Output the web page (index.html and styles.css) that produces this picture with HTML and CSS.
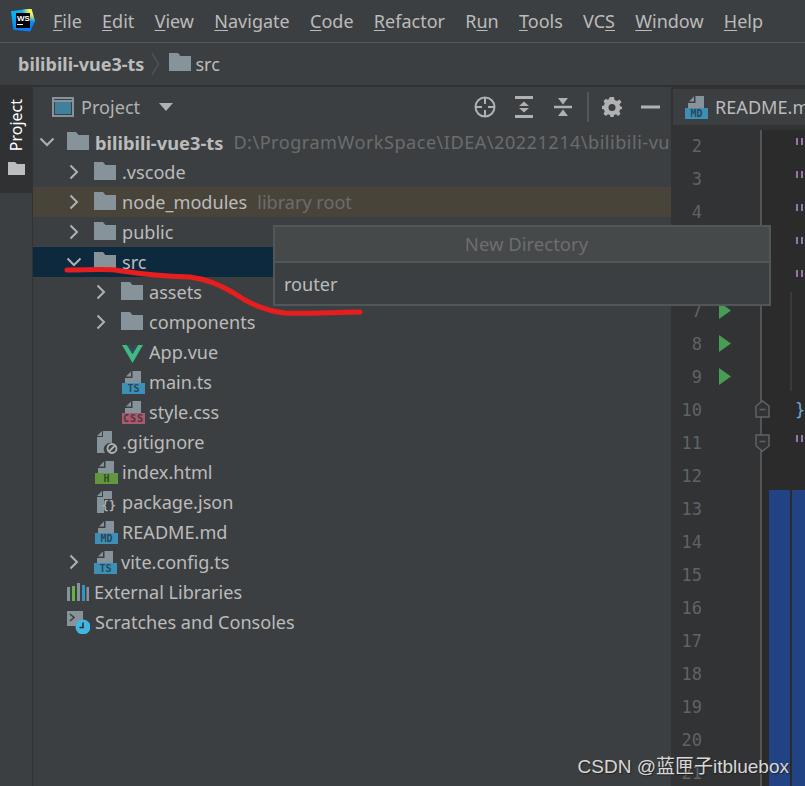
FILE: index.html
```html
<!DOCTYPE html>
<html lang="en">
<head>
<meta charset="utf-8">
<title>bilibili-vue3-ts</title>
<link rel="stylesheet" href="styles.css">
</head>
<body>
<svg width="0" height="0" class="defs">
  <defs>
    <symbol id="folder" viewBox="0 0 22 18"><path d="M0 0H9L11.500 3H22V18H0Z" fill="#87939a"/></symbol>
    <symbol id="chev-r" viewBox="0 0 12 16"><path d="M2.500 1.500L9 8L2.500 14.500" fill="none" stroke="#afb1b3" stroke-width="2"/></symbol>
    <symbol id="chev-d" viewBox="0 0 16 12"><path d="M1.500 2.500L8 9L14.500 2.500" fill="none" stroke="#afb1b3" stroke-width="2"/></symbol>
    <symbol id="sheet" viewBox="0 0 23 23"><path d="M10.500 0H19V12H3V7H10.500Z" fill="#87939a"/><path d="M4 5.500L9 0.500V5.500Z" fill="#87939a"/></symbol>
  </defs>
</svg>
<div class="app">
  <header class="menubar">
    <div class="logo"><span class="logo-box"><span class="logo-inner"><span class="logo-ws">WS</span><span class="logo-bar"></span></span></span></div>
    <nav class="menu">
      <span class="m m-file"><u>F</u>ile</span>
      <span class="m"><u>E</u>dit</span>
      <span class="m"><u>V</u>iew</span>
      <span class="m"><u>N</u>avigate</span>
      <span class="m"><u>C</u>ode</span>
      <span class="m"><u>R</u>efactor</span>
      <span class="m">R<u>u</u>n</span>
      <span class="m"><u>T</u>ools</span>
      <span class="m">VC<u>S</u></span>
      <span class="m"><u>W</u>indow</span>
      <span class="m"><u>H</u>elp</span>
    </nav>
  </header>
  <div class="navbar">
    <strong class="crumb-root">bilibili-vue3-ts</strong>
    <svg class="crumb-sep" width="9" height="24" viewBox="0 0 9 24"><path d="M1 1L7.500 12L1 23" fill="none" stroke="#5d5f60" stroke-width="1"/></svg>
    <svg class="crumb-folder" width="22" height="18"><use href="#folder"/></svg>
    <span class="crumb-src">src</span>
  </div>
  <main class="workspace">
    <aside class="stripe">
      <div class="stripe-tab">
        <span class="stripe-label">Project</span>
        <svg class="stripe-icon" width="17" height="13" viewBox="0 0 17 13"><path d="M0 0H7L9 2H17V13H0Z" fill="#bdbdbd"/></svg>
      </div>
    </aside>
    <section class="panel">
      <div class="panel-head">
        <svg class="ph-icon" width="22" height="20" viewBox="0 0 22 20"><rect x="1" y="1" width="20" height="18" fill="none" stroke="#87939a" stroke-width="2"/><rect x="2" y="3" width="18" height="2" fill="#87939a"/><rect x="3" y="5" width="16" height="12" fill="#40809e"/></svg>
        <span class="ph-title">Project</span>
        <svg class="ph-caret" width="14" height="8" viewBox="0 0 14 8"><path d="M0 0H14L7 8Z" fill="#afb1b3"/></svg>
        <div class="ph-tools">
          <svg class="t-cross" width="22" height="22" viewBox="0 0 22 22"><circle cx="11" cy="11" r="9.500" fill="none" stroke="#afb1b3" stroke-width="2"/><path d="M11 1V8M11 14V21M1 11H8M14 11H21" stroke="#afb1b3" stroke-width="2"/></svg>
          <svg class="t-exp" width="18" height="22" viewBox="0 0 18 22"><path d="M0 1.500H18M0 20.500H18" stroke="#afb1b3" stroke-width="3"/><path d="M9 5.500L14 10H4ZM9 16.500L4 12H14Z" fill="#afb1b3"/></svg>
          <svg class="t-col" width="18" height="20" viewBox="0 0 18 20"><path d="M0 10H18" stroke="#afb1b3" stroke-width="2.500"/><path d="M9 7.500L4 1H14ZM9 12.500L14 19H4Z" fill="#afb1b3"/></svg>
          <span class="t-sep"></span>
          <svg class="t-gear" width="20" height="20" viewBox="0 0 20 20"><path d="M8 0H12L12.600 3L15 4L17.500 2.500L19.500 5L17.500 7.500L18 9L20 10V12L18 12.500L17.300 14.500L18.500 17L16 19L14 17.300L12 18L11.500 20H8.500L8 18L6 17.300L4 19L1.500 17L2.700 14.500L2 12.500L0 12V9L2 8.500L2.700 6.500L1.500 4L4 1.800L6 3Z" fill="#afb1b3"/><circle cx="10" cy="10.500" r="3.500" fill="#3c3f41"/></svg>
          <svg class="t-min" width="19" height="4" viewBox="0 0 19 4"><rect width="19" height="3" y="0.500" fill="#afb1b3"/></svg>
        </div>
      </div>
      <div class="tree">
        <div class="row d0"><svg class="chev" width="16" height="12"><use href="#chev-d"/></svg><svg class="ic-folder" width="22" height="18"><use href="#folder"/></svg><strong class="name name-root">bilibili-vue3-ts</strong><span class="hint hint-path">D:\ProgramWorkSpace\IDEA\20221214\bilibili-vue3-ts</span></div>
        <div class="row d1"><svg class="chev" width="12" height="16"><use href="#chev-r"/></svg><svg class="ic-folder" width="22" height="18"><use href="#folder"/></svg><span class="name">.vscode</span></div>
        <div class="row d1 lib"><svg class="chev" width="12" height="16"><use href="#chev-r"/></svg><svg class="ic-folder" width="22" height="18"><use href="#folder"/></svg><span class="name">node_modules</span><span class="hint">library root</span></div>
        <div class="row d1"><svg class="chev" width="12" height="16"><use href="#chev-r"/></svg><svg class="ic-folder" width="22" height="18"><use href="#folder"/></svg><span class="name">public</span></div>
        <div class="row d1 sel"><svg class="chev" width="16" height="12"><use href="#chev-d"/></svg><svg class="ic-folder" width="22" height="18"><use href="#folder"/></svg><span class="name">src</span></div>
        <div class="row d2"><svg class="chev" width="12" height="16"><use href="#chev-r"/></svg><svg class="ic-folder" width="22" height="18"><use href="#folder"/></svg><span class="name">assets</span></div>
        <div class="row d2"><svg class="chev" width="12" height="16"><use href="#chev-r"/></svg><svg class="ic-folder" width="22" height="18"><use href="#folder"/></svg><span class="name">components</span></div>
        <div class="row d2 leaf"><svg class="ic-file" width="23" height="23" viewBox="0 0 23 23"><path d="M0 4H5L10.500 13L16 4H21L10.500 22Z" fill="#41b883"/><path d="M5 4H8L10.500 8L13 4H16L10.500 13Z" fill="#35495e"/></svg><span class="name">App.vue</span></div>
        <div class="row d2 leaf"><span class="fico"><svg width="23" height="23"><use href="#sheet"/></svg><span class="tag tag-ts">TS</span></span><span class="name">main.ts</span></div>
        <div class="row d2 leaf"><span class="fico"><svg width="23" height="23"><use href="#sheet"/></svg><span class="tag tag-css">CSS</span></span><span class="name">style.css</span></div>
        <div class="row d1 leaf"><svg class="ic-file" width="23" height="23" viewBox="0 0 23 23"><path d="M8 0H17V12A6.500 6.500 0 0 0 10 22H2V6H8Z" fill="#87939a"/><path d="M7 0V5H2Z" fill="#87939a"/><circle cx="17" cy="17.500" r="4.500" fill="none" stroke="#afb1b3" stroke-width="1.800"/><path d="M14 20.500L20 14.500" stroke="#afb1b3" stroke-width="1.800"/></svg><span class="name">.gitignore</span></div>
        <div class="row d1 leaf"><span class="fico"><svg width="23" height="23"><use href="#sheet"/></svg><span class="tag tag-html">H</span></span><span class="name">index.html</span></div>
        <div class="row d1 leaf"><svg class="ic-file" width="23" height="23" viewBox="0 0 23 23"><path d="M8 0H17V8H9V22H2V6H8Z" fill="#87939a"/><path d="M7 0V5H2Z" fill="#87939a"/><text x="6.500" y="19" class="json-text">{}</text></svg><span class="name">package.json</span></div>
        <div class="row d1 leaf"><span class="fico"><svg width="23" height="23"><use href="#sheet"/></svg><span class="tag tag-ts">MD</span></span><span class="name">README.md</span></div>
        <div class="row d1"><svg class="chev" width="12" height="16"><use href="#chev-r"/></svg><span class="fico fico-gap"><svg width="23" height="23"><use href="#sheet"/></svg><span class="tag tag-ts">TS</span></span><span class="name">vite.config.ts</span></div>
        <div class="row d0 leaf"><svg class="ic-file" width="22" height="18" viewBox="0 0 22 18"><rect x="0" y="4" width="3" height="14" fill="#87939a"/><rect x="5" y="3" width="3" height="15" fill="#62b543"/><rect x="10" y="0" width="3" height="18" fill="#87939a"/><rect x="15" y="2" width="3" height="16" fill="#3592c4"/><rect x="19.500" y="4" width="2.500" height="14" fill="#87939a"/></svg><span class="name">External Libraries</span></div>
        <div class="row d0 leaf"><svg class="ic-file" width="23" height="23" viewBox="0 0 23 23"><path d="M0 0H16V9A7.500 7.500 0 0 0 9 15H0Z" fill="#87939a"/><path d="M3 3L7 6.500L3 10" fill="none" stroke="#3c3f41" stroke-width="1.600"/><circle cx="16" cy="16" r="7.500" fill="#40b6e0"/><path d="M16 11.500V16.500H12.500" fill="none" stroke="#2b2b2b" stroke-width="1.500"/></svg><span class="name">Scratches and Consoles</span></div>
      </div>
    </section>
    <section class="editor">
      <div class="tabbar">
        <span class="fico"><svg width="23" height="23"><use href="#sheet"/></svg><span class="tag tag-ts">MD</span></span>
        <span class="tab-title">README.md</span>
      </div>
      <div class="lines">
        <div class="ln"><span class="num">2</span><span class="mark"></span><span class="code"><i class="qq"></i></span></div>
        <div class="ln"><span class="num">3</span><span class="mark"></span><span class="code"><i class="qq"></i></span></div>
        <div class="ln"><span class="num">4</span><span class="mark"></span><span class="code"><i class="qq"></i></span></div>
        <div class="ln"><span class="num">5</span><span class="mark"></span><span class="code"><i class="qq"></i></span></div>
        <div class="ln"><span class="num">6</span><span class="mark"></span><span class="code"><i class="qq"></i></span></div>
        <div class="ln"><span class="num">7</span><span class="mark"><svg class="run" width="12" height="17" viewBox="0 0 12 17"><path d="M0 0L12 8.500L0 17Z" fill="#499c54"/></svg></span><span class="code"></span></div>
        <div class="ln"><span class="num">8</span><span class="mark"><svg class="run" width="12" height="17" viewBox="0 0 12 17"><path d="M0 0L12 8.500L0 17Z" fill="#499c54"/></svg></span><span class="code"></span></div>
        <div class="ln"><span class="num">9</span><span class="mark"><svg class="run" width="12" height="17" viewBox="0 0 12 17"><path d="M0 0L12 8.500L0 17Z" fill="#499c54"/></svg></span><span class="code"></span></div>
        <div class="ln"><span class="num">10</span><span class="mark"></span><span class="code"><b class="brace">}</b></span></div>
        <div class="ln"><span class="num">11</span><span class="mark"></span><span class="code"><i class="qq"></i></span></div>
        <div class="ln"><span class="num">12</span><span class="mark"></span><span class="code"></span></div>
        <div class="ln"><span class="num">13</span><span class="mark"></span><span class="code"></span></div>
        <div class="ln"><span class="num">14</span><span class="mark"></span><span class="code"></span></div>
        <div class="ln"><span class="num">15</span><span class="mark"></span><span class="code"></span></div>
        <div class="ln"><span class="num">16</span><span class="mark"></span><span class="code"></span></div>
        <div class="ln"><span class="num">17</span><span class="mark"></span><span class="code"></span></div>
        <div class="ln"><span class="num">18</span><span class="mark"></span><span class="code"></span></div>
        <div class="ln"><span class="num">19</span><span class="mark"></span><span class="code"></span></div>
        <div class="ln"><span class="num">20</span><span class="mark"></span><span class="code"></span></div>
        <div class="ln"><span class="num">21</span><span class="mark"></span><span class="code"></span></div>
      </div>
      <div class="selection"></div>
      <div class="indent indent-a"></div>
      <div class="indent indent-b"></div>
      <svg class="fold fold-a" width="15" height="18" viewBox="0 0 15 18"><path d="M1 17V6L7.500 1L14 6V17Z" fill="#313335" stroke="#606366" stroke-width="1.500"/><path d="M4.500 9.500H10.500" stroke="#606366" stroke-width="1.500"/></svg>
      <svg class="fold fold-b" width="15" height="18" viewBox="0 0 15 18"><path d="M1 1V12L7.500 17L14 12V1Z" fill="#313335" stroke="#606366" stroke-width="1.500"/><path d="M4.500 7.500H10.500" stroke="#606366" stroke-width="1.500"/></svg>
    </section>
  </main>
</div>
<div class="popup">
  <div class="popup-title">New Directory</div>
  <div class="popup-input">router</div>
</div>
<svg class="scribble" width="805" height="786" viewBox="0 0 805 786"><path d="M67 270C85 270 100 269 115 270C135 273 150 276 190 277C205 279 220 285 232 292C245 301 262 311 285 313C310 314 335 312 360 312" fill="none" stroke="#e81e1e" stroke-width="5" stroke-linecap="round"/></svg>
<div class="watermark">CSDN @蓝匣子itbluebox</div>
</body>
</html>
```
FILE: styles.css
```css
* { box-sizing: border-box; }
html, body { margin: 0; padding: 0; height: 100%; overflow: hidden; }
body { position: relative; background: #3c3f41; color: #bbbbbb; font-family: "Noto Sans", "Open Sans", sans-serif; font-size: 18.1px; }
.defs { position: absolute; }
.app { display: flex; flex-direction: column; width: 805px; height: 786px; }

.menubar { display: flex; align-items: center; height: 43px; flex: none; border-bottom: 1px solid #515658; }
.logo { width: 53px; flex: none; padding-left: 11px; padding-bottom: 2px; }
.logo-box { display: block; width: 24px; height: 23px; padding: 4px 5px; background: radial-gradient(circle at 100% 0, #fcf84a 0 18%, transparent 40%), linear-gradient(160deg, #07c3f2 0%, #087cfa 80%); clip-path: polygon(0 12%, 85% 0, 100% 55%, 80% 100%, 10% 92%); }
.logo-inner { display: flex; flex-direction: column; width: 14px; height: 15px; padding: 1px 0 0 1px; background: #000; }
.logo-ws { color: #fff; font: bold 8px/9px "Liberation Sans", sans-serif; }
.logo-bar { width: 6px; height: 1px; margin-top: 1px; background: #fff; }
.menu { display: flex; gap: 20.3px; line-height: 24px; color: #bbbbbb; font-size: 18px; }
.m u { text-underline-offset: 2px; }

.navbar { display: flex; align-items: center; height: 44px; flex: none; padding: 0 0 0 18px; border-bottom: 2px solid #2f3133; }
.crumb-root { font-size: 18px; font-weight: 700; color: #bbbbbb; }
.crumb-sep { margin: 0 9px 0 7px; }
.crumb-folder { margin-right: 4px; margin-top: -4px; }
.crumb-src { color: #bbbbbb; }

.workspace { display: flex; flex: 1; min-height: 0; }
.stripe { width: 33px; flex: none; background: #3c3f41; border-right: 1px solid #323232; }
.stripe-tab { display: flex; flex-direction: column; align-items: center; height: 106px; padding-top: 12px; background: #2f3133; }
.stripe-label { writing-mode: vertical-rl; transform: rotate(180deg); color: #ffffff; font-size: 16px; line-height: 18px; }
.stripe-icon { margin-top: 11px; }

.panel { width: 638px; flex: none; display: flex; flex-direction: column; background: #3c3f41; overflow: hidden; }
.panel-head { display: flex; align-items: center; height: 40px; flex: none; padding-left: 19px; }
.ph-title { margin-left: 7px; color: #afb1b3; }
.ph-caret { margin-left: 19px; }
.ph-tools { display: flex; align-items: center; margin-left: auto; padding-right: 11px; }
.t-exp { margin-left: 19px; }
.t-col { margin-left: 21px; }
.t-sep { width: 2px; height: 30px; margin: 0 13px 0 15px; background: #515658; }
.t-min { margin-left: 19px; }

.tree { display: flex; flex-direction: column; }
.row { display: flex; align-items: center; height: 30px; white-space: nowrap; }
.d0 { padding-left: 6px; }
.d1 { padding-left: 35px; }
.d2 { padding-left: 62px; }
.chev { flex: none; margin-right: 14px; }
.row > svg[height="12"].chev { margin-left: -2px; margin-right: 12px; }
.d0 > svg[height="12"].chev { margin-left: 0; margin-right: 12px; }
.ic-folder { flex: none; margin-right: 6px; margin-top: -2px; }
.d0.leaf > .ic-file { margin-left: 1px; margin-right: 5px; }
.ic-file { flex: none; margin-right: 4px; }
.leaf { margin-left: 27px; }
.name { color: #bbbbbb; }
.name-root { font-size: 18.3px; }
.hint { margin-left: 10px; color: #6c6c6c; }
.hint-path { letter-spacing: 0.5px; }
.lib { background: #49443a; }
.sel { background: #0d293e; }

.fico { position: relative; display: block; width: 23px; height: 23px; flex: none; margin-right: 4px; }
.fico > svg { display: block; }
.tag { position: absolute; left: 0; bottom: 0; width: 23px; height: 11px; text-align: center; color: #3c3f41; font: bold 10px/11px "DejaVu Sans Mono", monospace; }
.tag-ts { background: #3d8fb5; color: #28475a; }
.tag-css { background: #b0566e; color: #3c3f41; letter-spacing: 1px; }
.tag-html { background: #62963f; color: #2e4a22; }
.json-text { fill: #afb1b3; font: bold 12px "DejaVu Sans Mono", monospace; }

.editor { position: relative; flex: 1; min-width: 0; overflow: hidden; background: #313335; }
.tabbar { display: flex; align-items: center; height: 40px; padding-left: 12px; background: #3c3f41; border-left: 2px solid #323232; border-top: 2px solid #323232; border-bottom: 2px solid #323232; white-space: nowrap; }
.tab-title { margin-left: 3px; color: #bbbbbb; }
.lines { display: flex; flex-direction: column; padding-top: 3px; }
.ln { display: flex; height: 33px; flex: none; }
.num { width: 31px; flex: none; text-align: right; color: #606366; font: 17px/33px "DejaVu Sans Mono", monospace; }
.mark { display: flex; align-items: center; width: 60px; flex: none; padding-left: 17px; border-right: 2px solid #555555; }
.run { margin-top: -2px; }
.code { flex: 1; display: flex; align-items: center; padding-left: 34px; background: #2b2b2b; }
.qq { display: block; width: 7px; height: 7px; margin-top: -10px; border-left: 2px solid #9876aa; border-right: 2px solid #9876aa; }
.brace { margin-left: -1px; color: #6fa8dc; font: 17px/33px "DejaVu Sans Mono", monospace; }
.selection { position: absolute; left: 98px; right: 0; top: 403px; bottom: 0; background: #214283; }
.indent { position: absolute; left: 119px; width: 2px; background: #3a3a3a; }
.indent-a { top: 205px; height: 99px; }
.indent-b { top: 370px; bottom: 0; background: #2b2b2b; }
.fold { position: absolute; left: 84px; }
.fold-a { top: 313px; }
.fold-b { top: 347px; }

.popup { position: absolute; left: 273px; top: 225px; width: 498px; height: 81px; border: 2px solid #515658; background: #3c3f41; }
.popup-title { height: 36px; padding-left: 9px; text-align: center; font-size: 18.5px; line-height: 33px; color: #6e6e6e; background: #45494a; border-bottom: 2px solid #555555; }
.popup-input { padding-left: 9px; line-height: 43px; color: #bbbbbb; }
.scribble { position: absolute; left: 0; top: 0; pointer-events: none; }
.watermark { position: absolute; right: 16px; bottom: 7px; color: #d8d8d8; font: 19px/24px "Liberation Sans", "Noto Sans CJK SC", sans-serif; text-shadow: 1px 1px 1px #222; }
```
